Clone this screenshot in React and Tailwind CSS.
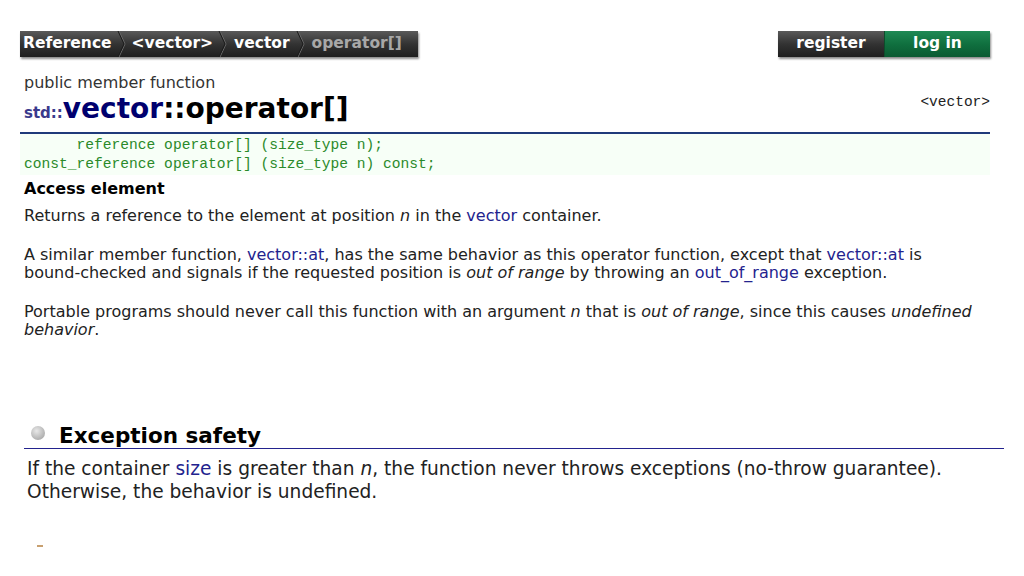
import React from 'react';

const Sep = () => (
  <svg width="10" height="26" viewBox="0 0 10 26" className="shrink-0">
    <path d="M2 0 L8 13 L2 26" fill="none" stroke="#6a6a6a" strokeWidth="1" />
    <path d="M1 0 L7 13 L1 26" fill="none" stroke="#1a1a1a" strokeWidth="1" />
  </svg>
);

const Breadcrumb = () => (
  <div className="flex items-center h-[26px] bg-gradient-to-b from-[#5a5a5a] via-[#333] to-[#1e1e1e] shadow-[1px_2px_2px_rgba(0,0,0,0.45)] text-[15.5px] font-bold text-white pl-[3px] pr-[16px]">
    <span className="pr-[5px]">Reference</span>
    <Sep />
    <span className="px-[5px]">&lt;vector&gt;</span>
    <Sep />
    <span className="px-[6px]">vector</span>
    <Sep />
    <span className="pl-[6px] text-[#a8a8a8]">operator[]</span>
  </div>
);

const Link = ({ children }) => <span className="text-[#23238e]">{children}</span>;

const App = () => {
  return (
    <div className="w-[1024px] h-[576px] bg-white overflow-hidden font-['DejaVu_Sans','Verdana',sans-serif] text-[#222]">
      <div className="pl-[20px] pr-[34px] pt-[31px]">
        <div className="flex justify-between">
          <Breadcrumb />
          <div className="flex h-[26px] text-[15.5px] font-bold text-white shadow-[1px_2px_2px_rgba(0,0,0,0.45)]">
            <div className="w-[106px] flex items-center justify-center bg-gradient-to-b from-[#5a5a5a] via-[#333] to-[#1e1e1e]">register</div>
            <div className="w-[106px] flex items-center justify-center bg-gradient-to-b from-[#1f8a55] via-[#10703f] to-[#0a5a32] border-l border-[#0d4d2c]">log in</div>
          </div>
        </div>

        <div className="mt-[17px] pl-[4px] text-[16px] leading-[18px] text-[#333]">public member function</div>
        <div className="flex items-end justify-between pl-[4px]">
          <h1 className="font-bold leading-[33px] text-black">
            <span className="text-[15px] text-[#3a3a8c]">std::</span>
            <span className="text-[28px] text-[#00006e]">vector</span>
            <span className="text-[28px]">::operator[]</span>
          </h1>
          <span className="font-['Liberation_Mono',monospace] text-[14.5px] text-[#222] mb-[16px]">&lt;vector&gt;</span>
        </div>
        <div className="h-[2px] bg-[#1f3a7a] mt-[2px]" />
        <pre className="bg-[#f7fff7] font-['Liberation_Mono',monospace] text-[14.6px] leading-[19px] text-[#2a8a2a] pt-[2px] pb-[1px] pl-[4px]">
{`      reference operator[] (size_type n);
const_reference operator[] (size_type n) const;`}
        </pre>

        <div className="pl-[4px] text-[16px] leading-[18px]">
          <div className="font-bold text-black mt-[5px]">Access element</div>
          <p className="mt-[9px]">
            Returns a reference to the element at position <i>n</i> in the <Link>vector</Link> container.
          </p>
          <p className="mt-[21px]">
            A similar member function, <Link>vector::at</Link>, has the same behavior as this operator function, except that <Link>vector::at</Link> is
            <br />
            bound-checked and signals if the requested position is <i>out of range</i> by throwing an <Link>out_of_range</Link> exception.
          </p>
          <p className="mt-[21px]">
            Portable programs should never call this function with an argument <i>n</i> that is <i>out of range</i>, since this causes <i>undefined</i>
            <br />
            <i>behavior</i>.
          </p>
        </div>
      </div>

      <div className="pl-[24px] pr-[20px] mt-[84px]">
        <div className="flex items-center h-[26px] border-b border-[#23238e]">
          <span className="w-[14px] h-[14px] rounded-full bg-[radial-gradient(circle_at_40%_35%,#e8e8e8,#9a9a9a)] ml-[7px] mr-[14px] mb-[6px]" />
          <h2 className="text-[21.5px] font-bold text-black leading-[26px]">Exception safety</h2>
        </div>
        <p className="pl-[3px] text-[18.6px] leading-[23px] mt-[8px]">
          If the container <Link>size</Link> is greater than <i>n</i>, the function never throws exceptions (no-throw guarantee).
          <br />
          Otherwise, the behavior is undefined.
        </p>
        <div className="ml-[13px] mt-[42px] w-[6px] h-[2px] bg-[#c8a070]" />
      </div>
    </div>
  );
};

export default App;
